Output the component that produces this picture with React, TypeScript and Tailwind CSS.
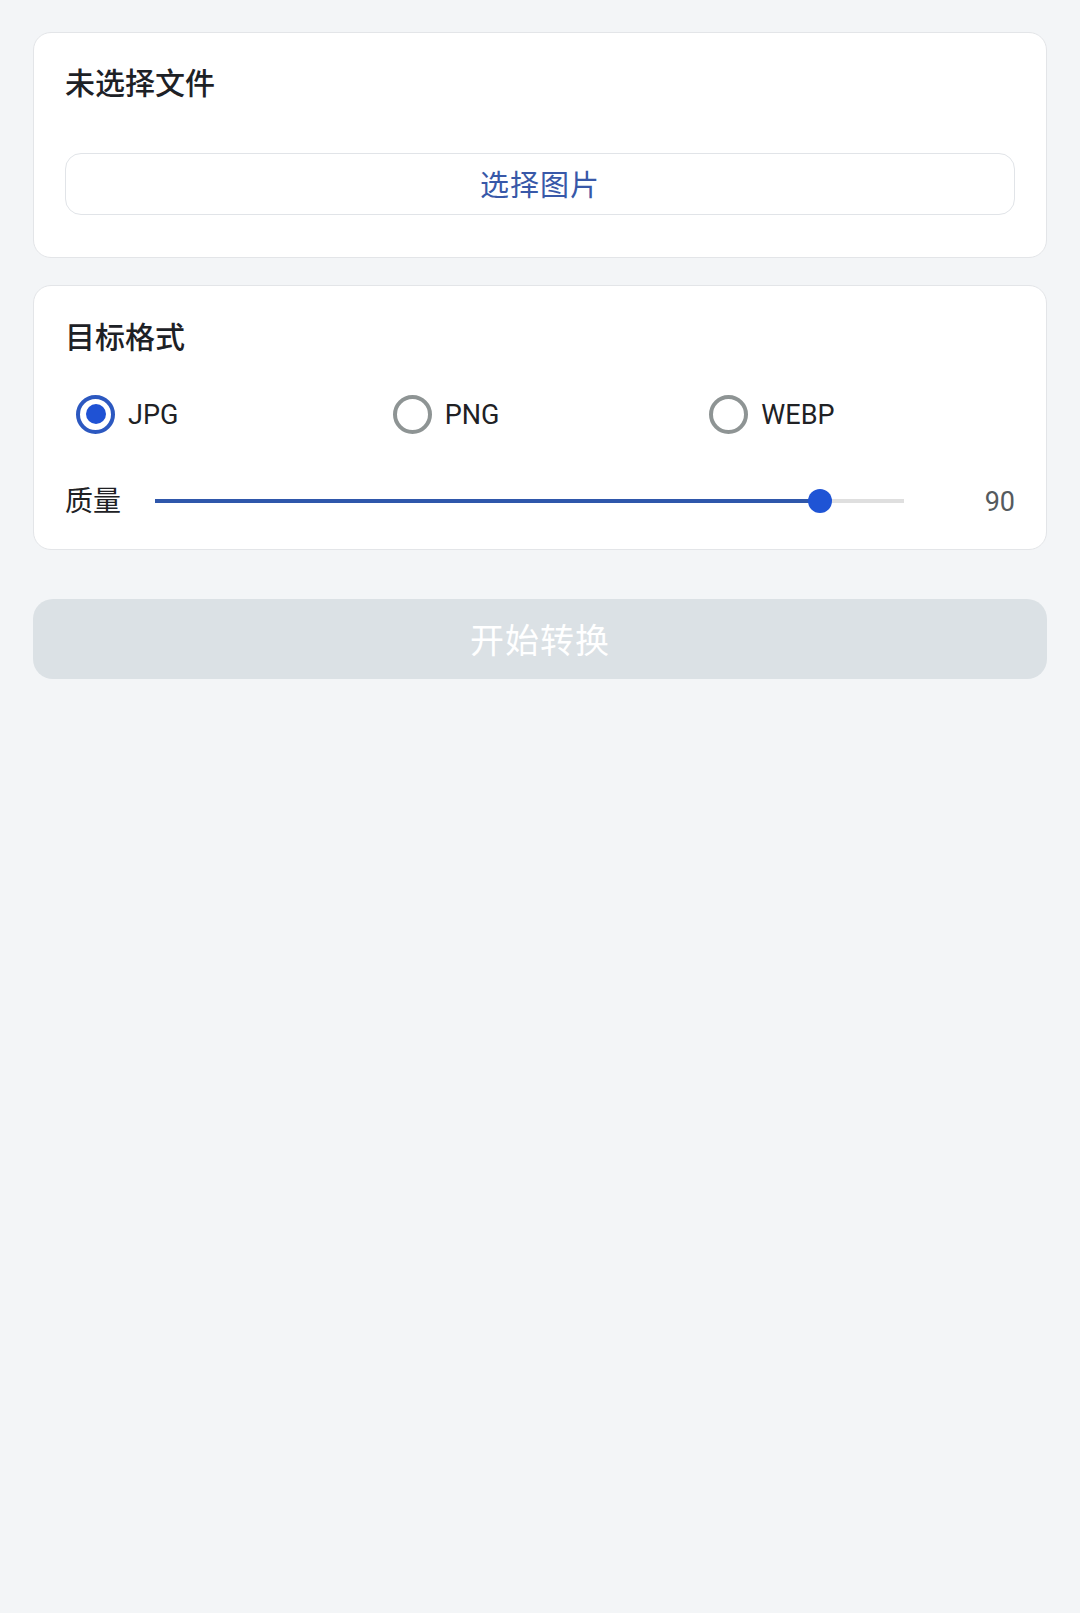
import React, { useState } from "react";

const formats = ["JPG", "PNG", "WEBP"];

const Radio = ({ checked }: { checked: boolean }) => (
  <span
    className={`flex h-[39px] w-[39px] shrink-0 items-center justify-center rounded-full border-4 ${
      checked ? "border-[#2c58c0]" : "border-[#8e9494]"
    }`}
  >
    {checked && <span className="h-[20px] w-[20px] rounded-full bg-[#1f52d4]" />}
  </span>
);

const QualitySlider = ({ value }: { value: number }) => {
  const pos = `calc(12px + (100% - 24px) * ${value / 100})`;
  return (
    <div className="relative flex h-[24px] flex-1 items-center">
      <div className="h-[4px] w-full bg-[#dfdfdf]" />
      <div className="absolute left-0 h-[4px] bg-[#2f57ab]" style={{ width: pos }} />
      <div
        className="absolute h-[24px] w-[24px] -translate-x-1/2 rounded-full bg-[#1f54d5]"
        style={{ left: pos }}
      />
    </div>
  );
};

export default function App() {
  const [format, setFormat] = useState("JPG");
  const quality = 90;

  return (
    <div
      className="min-h-[1613px] bg-[#f3f5f7] px-[33px] pt-[32px]"
      style={{ fontFamily: "Roboto, 'Noto Sans CJK SC', sans-serif" }}
    >
      <div className="rounded-[18px] border-[1.5px] border-[#e3e5e8] bg-white px-[31px] pb-[42px] pt-[28px]">
        <h2 className="text-[30px] font-medium leading-[45px] text-[#1d2126]">未选择文件</h2>
        <button className="mt-[47px] flex h-[62px] w-full items-center justify-center rounded-[16px] border-[1.5px] border-[#e1e4e8] bg-white pt-[6px] text-[29px] tracking-[1px] text-[#3858a8]">
          选择图片
        </button>
      </div>

      <div className="mt-[27px] rounded-[18px] border-[1.5px] border-[#e3e5e8] bg-white px-[31px] pb-[28px] pt-[29px]">
        <h2 className="text-[30px] font-medium leading-[45px] text-[#1d2126]">目标格式</h2>
        <div className="mt-[30px] grid grid-cols-3">
          {formats.map((f) => (
            <label
              key={f}
              className="flex h-[48px] cursor-pointer items-center gap-[13px] pl-[11px]"
              onClick={() => setFormat(f)}
            >
              <Radio checked={format === f} />
              <span className="pt-[2px] text-[27px] text-[#202124]">{f}</span>
            </label>
          ))}
        </div>
        <div className="mt-[43px] flex h-[40px] items-center">
          <span className="pt-[2px] text-[28px] text-[#202124]">质量</span>
          <div className="ml-[34px] flex flex-1">
            <QualitySlider value={quality} />
          </div>
          <span className="w-[111px] pt-[2px] text-right text-[27px] text-[#555a5e]">{quality}</span>
        </div>
      </div>

      <button className="mt-[49px] flex h-[80px] w-full items-center justify-center rounded-[20px] bg-[#dbe1e5] pt-[4px] text-[34px] tracking-[1px] text-white">
        开始转换
      </button>
    </div>
  );
}
